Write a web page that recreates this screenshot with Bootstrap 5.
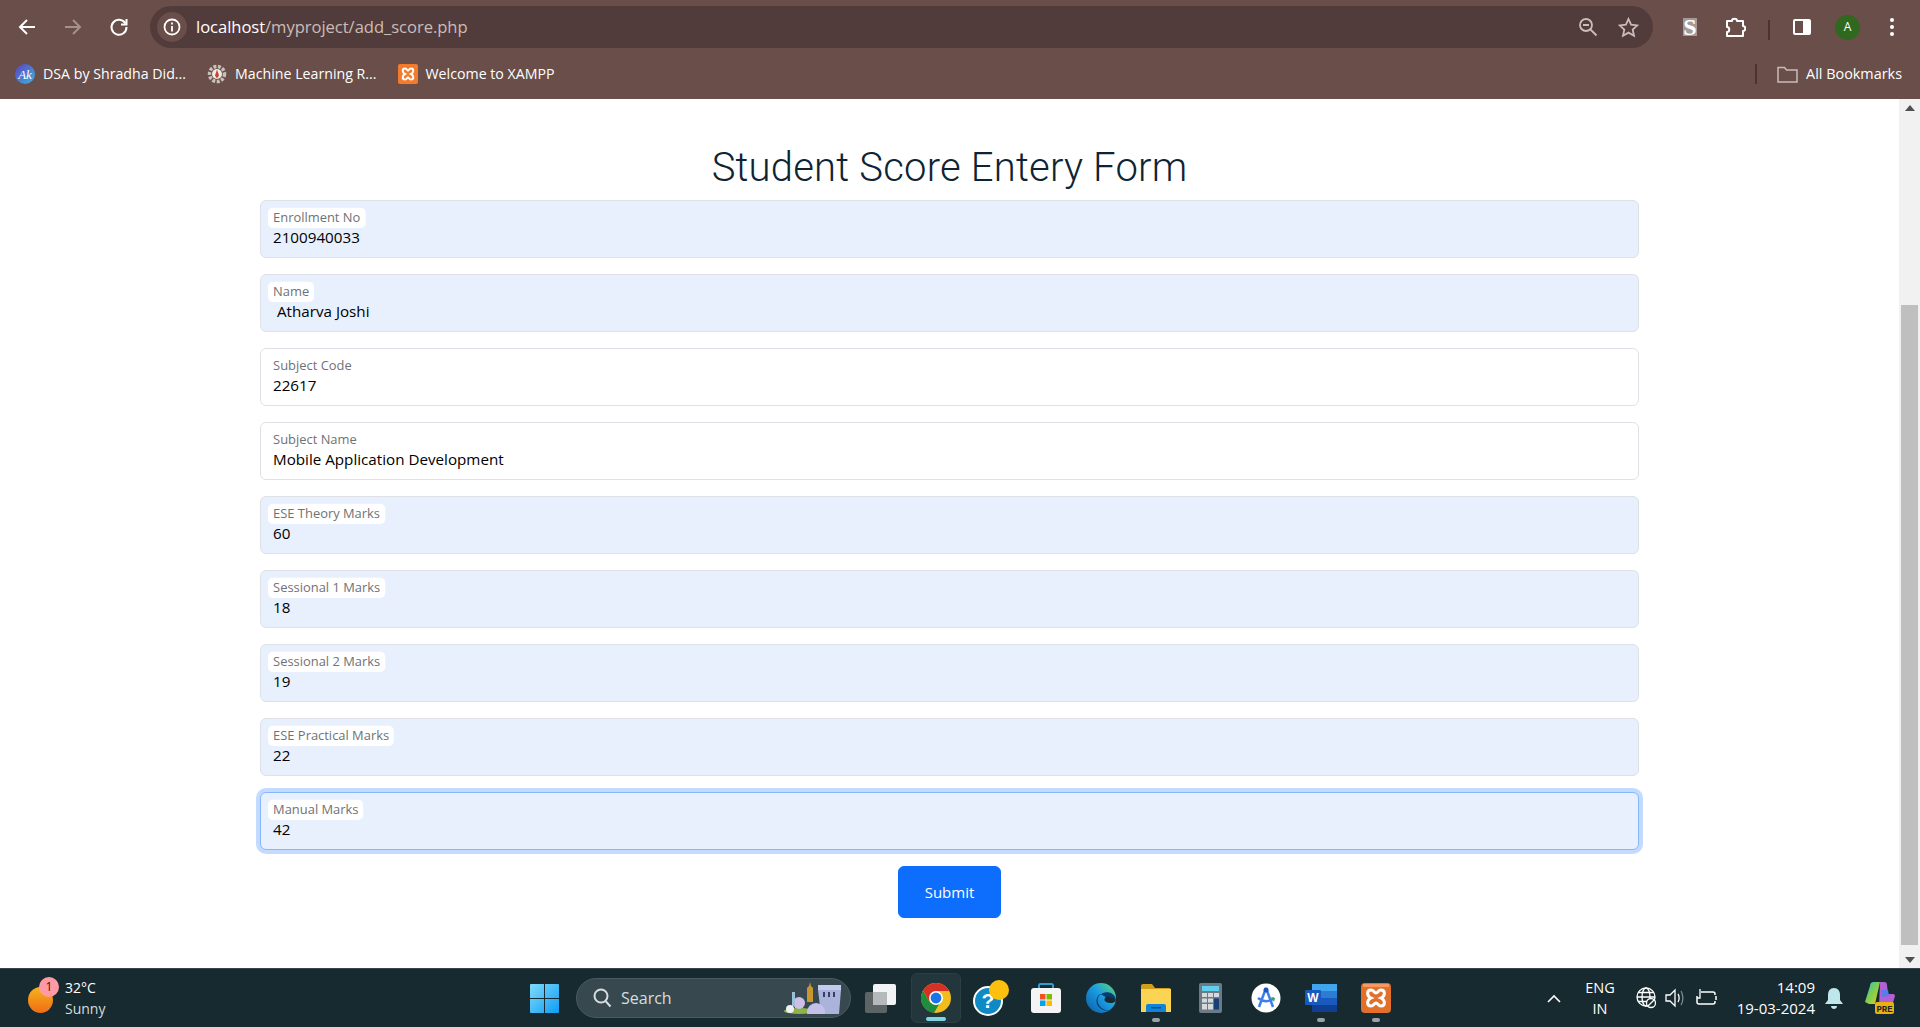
<!DOCTYPE html>
<html lang="en">
<head>
    <meta charset="UTF-8">
    <meta name="viewport" content="width=device-width, initial-scale=1.0">
    <title>Student Score Entery Form</title>
    <link rel="stylesheet" href="https://cdn.jsdelivr.net/npm/bootstrap@5.3.0/dist/css/bootstrap.min.css">
    <style>
        html, body { height: 100%; overflow: hidden; }
        body { font-family: "Open Sans", sans-serif; }

        .app-shell { height: 100vh; }

        /* browser frame */
        .browser-top { height: 99px; background: #6a4e49; color: #fff; flex: none; }
        .toolbar { height: 54px; padding-top: 6px; }
        .nav-slot { width: 46px; height: 42px; flex: none; }
        .nav-slot-first { margin-left: 4px; }
        .address-bar { width: 1503px; height: 42px; margin-left: 8px; background: #523c3b; border-radius: 21px; padding: 0 14px 0 7px; flex: none; }
        .info-chip { width: 30px; height: 30px; background: #6a4e49; border-radius: 50%; flex: none; }
        .url-text { font-size: 16.6px; margin-left: 9px; color: #fff; letter-spacing: -.05px; }
        .url-text span { color: #c9bcb9; }
        .addr-icons { gap: 20px; }
        .tool-slot { width: 41px; height: 42px; flex: none; }
        .avatar-dot { width: 25px; height: 25px; border-radius: 50%; background: #2f691d; font-size: 12px; }
        .v-sep { width: 2px; height: 20px; background: #4b3330; flex: none; }
        .sep-wrap { margin: 0 11px 0 13px; }
        .avatar-slot { margin-left: 5px; }
        .dots-slot { margin-left: 3px; }

        .bookmarks { height: 45px; padding-bottom: 5px; font-size: 14.2px; padding-left: 15px; padding-right: 18px; }
        .bm-item { width: 20px; height: 20px; flex: none; }
        .bm-text { margin-left: 8px; margin-right: 21px; }
        .bm-folder { margin-left: 20px; }
        .bm-all { font-size: 14.4px; }

        /* page */
        .page-wrap { min-height: 0; }
        .page-body { min-width: 0; padding-top: 45px; overflow: hidden; }
        .form-box { width: 1379px; }
        .form-title { font-family: Roboto, sans-serif; font-weight: 300; font-size: 40px; line-height: 48px; color: #0f2433; margin-bottom: 8px; letter-spacing: .2px; }
        .form-box .form-control { font-size: 15.2px; color: #000; }
        .form-box .form-floating > .form-control:not(:placeholder-shown) ~ label { font-size: 15.2px; line-height: 22px; width: auto; opacity: 1; color: #6f7275; }
        .form-box .form-floating > .form-control:not(:placeholder-shown) ~ label::after { content: ""; position: absolute; top: 1rem; left: .375rem; right: .375rem; height: 24px; z-index: -1; background: #fff; border-radius: 6px; }
        .form-box .is-autofilled { background: #e8f0fe; }
        .form-box .is-focused { background: #e8f0fe; border-color: #86b7fe; box-shadow: 0 0 0 .25rem rgba(13, 110, 253, .25); }
        .submit-btn { width: 103px; height: 52px; font-size: 15px; }

        .fake-scrollbar { width: 21px; background: #f1f1f1; flex: none; padding: 0 2px; }
        .scroll-arrow { height: 17px; flex: none; }
        .scroll-space { height: 189px; flex: none; }
        .scroll-thumb { height: 640px; background: #bfbfbf; flex: none; }

        /* taskbar */
        .taskbar { height: 59px; background: #172a30; color: #fff; border-top: 1px solid #3a4448; flex: none; font-size: 14px; line-height: 1.25; }
        .weather { width: 530px; padding-left: 28px; flex: none; }
        .weather-icon { width: 37px; height: 40px; flex: none; margin-top: -3px; }
        .weather-text { line-height: 21px; color: #fff; }
        .weather-text span { color: #d5dcde; }
        .win-slot { width: 46px; flex: none; }
        .search-pill { width: 275px; height: 40px; background: #37494f; border: 1px solid #4a5a60; border-radius: 20px; padding: 0 7px 0 16px; color: #d7dddf; flex: none; font-size: 16px; }
        .search-pill .search-word { margin-left: 9px; }
        .task-slot { width: 55px; height: 50px; flex: none; }
        .task-slot-first { margin-left: 2px; }
        .task-slot-active { background: #23363c; border: 1px solid #2c3f45; border-radius: 6px; width: 50px; margin: 0 2.5px; }
        .run-mark { width: 8px; height: 4px; border-radius: 2px; background: #9aa3a6; bottom: 1px; left: 50%; transform: translateX(-50%); }
        .run-mark-active { width: 20px; background: #7fd6de; }
        .tray { margin-left: 144px; }
        .tray-lang { width: 50px; text-align: center; line-height: 21px; margin-left: 14px; font-size: 14.5px; }
        .tray-globe { margin-left: 11px; }
        .tray-clock { text-align: right; line-height: 21px; width: 84px; margin-left: 14px; font-size: 15px; }
        .tray-bell { margin-left: 10px; }
        .tray-copilot { margin-left: 22px; }
    </style>
</head>
<body>
<div class="app-shell d-flex flex-column">

    <!-- browser toolbar -->
    <div class="browser-top">
        <div class="toolbar d-flex">
            <div class="nav-slot nav-slot-first d-flex align-items-center justify-content-center">
                <svg width="20" height="20" viewBox="0 0 20 20" fill="none" stroke="#fff" stroke-width="2"><path d="M18 10H3M10 3l-7 7 7 7"/></svg>
            </div>
            <div class="nav-slot d-flex align-items-center justify-content-center">
                <svg width="20" height="20" viewBox="0 0 20 20" fill="none" stroke="#a5918d" stroke-width="2"><path d="M2 10h15M10 3l7 7-7 7"/></svg>
            </div>
            <div class="nav-slot d-flex align-items-center justify-content-center">
                <svg width="20" height="20" viewBox="0 0 20 20" fill="none" stroke="#fff" stroke-width="2"><path d="M16.5 6.5A7.5 7.5 0 1 0 17.5 10"/><path d="M17.5 2v5.500h-5.500" fill="none"/></svg>
            </div>
            <div class="address-bar d-flex align-items-center">
                <div class="info-chip d-flex align-items-center justify-content-center">
                    <svg width="18" height="18" viewBox="0 0 18 18" fill="none" stroke="#fff" stroke-width="1.800"><circle cx="9" cy="9" r="7.500"/><path d="M9 8v5.500M9 4.500v2"/></svg>
                </div>
                <div class="url-text">localhost<span>/myproject/add_score.php</span></div>
                <div class="addr-icons ms-auto d-flex align-items-center">
                    <svg width="20" height="20" viewBox="0 0 20 20" fill="none" stroke="#c9bcb9" stroke-width="1.800"><circle cx="8" cy="8" r="6"/><path d="M5 8h6M12.500 12.500l6 6"/></svg>
                    <svg width="21" height="21" viewBox="0 0 21 21" fill="none" stroke="#c9bcb9" stroke-width="1.800"><path d="M10.500 2l2.600 5.700 6.200.7-4.600 4.200 1.300 6.100-5.500-3.100-5.500 3.100 1.300-6.100-4.600-4.200 6.200-.7z"/></svg>
                </div>
            </div>
            <div class="tool-slot ms-3 d-flex align-items-center justify-content-center">
                <svg width="18" height="36" viewBox="0 0 18 36"><rect x="2" y="9" width="14" height="18" fill="#a69a97"/><text x="9" y="26" text-anchor="middle" font-family="Liberation Serif, serif" font-weight="700" font-size="24" fill="#fff">S</text></svg>
            </div>
            <div class="tool-slot ms-1 d-flex align-items-center justify-content-center">
                <svg width="22" height="22" viewBox="0 0 22 22" fill="none" stroke="#fff" stroke-width="2" stroke-linejoin="round"><path d="M3 5h5c0-3 5-3 5 0h6v5c3 0 3 5 0 5v5H3v-4c3 0 3-5 0-5z"/></svg>
            </div>
            <div class="sep-wrap d-flex align-items-center"><div class="v-sep"></div></div>
            <div class="tool-slot d-flex align-items-center justify-content-center">
                <svg width="20" height="18" viewBox="0 0 20 18"><rect x="1" y="1" width="18" height="16" rx="2" fill="#fff"/><rect x="3" y="3" width="8" height="12" fill="#6a4e49"/></svg>
            </div>
            <div class="tool-slot avatar-slot d-flex align-items-center justify-content-center">
                <div class="avatar-dot d-flex align-items-center justify-content-center">A</div>
            </div>
            <div class="tool-slot dots-slot d-flex align-items-center justify-content-center">
                <svg width="6" height="20" viewBox="0 0 6 20" fill="#fff"><circle cx="3" cy="3" r="2"/><circle cx="3" cy="10" r="2"/><circle cx="3" cy="17" r="2"/></svg>
            </div>
        </div>
        <div class="bookmarks d-flex align-items-center">
            <svg class="bm-item" viewBox="0 0 20 20"><defs><linearGradient id="akGrad" x1="0" y1="0" x2="1" y2="1"><stop offset="0" stop-color="#5b3fc4"/><stop offset="1" stop-color="#3fb6d8"/></linearGradient></defs><circle cx="10" cy="10" r="10" fill="url(#akGrad)"/><text x="10" y="14.500" text-anchor="middle" font-family="Liberation Serif, serif" font-style="italic" font-size="13" fill="#fff">Ak</text></svg>
            <span class="bm-text">DSA by Shradha Did...</span>
            <svg class="bm-item" viewBox="0 0 20 20"><circle cx="10" cy="10" r="7.500" fill="none" stroke="#c9c0b8" stroke-width="3.500" stroke-dasharray="3 1.500"/><circle cx="10" cy="10" r="5" fill="#f0ebe6"/><path d="M10 5.500l2 6-2 3-2-3z" fill="#c8452c"/></svg>
            <span class="bm-text">Machine Learning R...</span>
            <svg class="bm-item" viewBox="0 0 20 20"><rect width="20" height="20" rx="2" fill="#f47b2b"/><path d="M7 4.500c-3 0-3 4 0 5.500-3 1.500-3 5.500 0 5.500 2 0 2-2 3-2s1 2 3 2c3 0 3-4 0-5.500 3-1.500 3-5.500 0-5.500-2 0-2 2-3 2s-1-2-3-2z" fill="none" stroke="#fff" stroke-width="2"/></svg>
            <span class="bm-text">Welcome to XAMPP</span>
            <div class="v-sep ms-auto"></div>
            <svg class="bm-folder" width="21" height="18" viewBox="0 0 21 18" fill="none" stroke="#c9bcb9" stroke-width="1.500"><path d="M1 2.500h6.500l2 2.500H20v12H1z"/></svg>
            <span class="bm-all ms-2">All Bookmarks</span>
        </div>
    </div>

    <!-- page with its scrollbar -->
    <div class="page-wrap d-flex flex-grow-1">
        <div class="page-body flex-grow-1 d-flex flex-column align-items-center">
            <div class="form-box">
                <h1 class="form-title text-center">Student Score Entery Form</h1>
                <form>
                    <div class="form-floating mb-3">
                        <input type="text" class="form-control is-autofilled" id="enrollment" placeholder=" " value="2100940033">
                        <label for="enrollment">Enrollment No</label>
                    </div>
                    <div class="form-floating mb-3">
                        <input type="text" class="form-control is-autofilled" id="studentName" placeholder=" " value=" Atharva Joshi">
                        <label for="studentName">Name</label>
                    </div>
                    <div class="form-floating mb-3">
                        <input type="text" class="form-control" id="subjectCode" placeholder=" " value="22617">
                        <label for="subjectCode">Subject Code</label>
                    </div>
                    <div class="form-floating mb-3">
                        <input type="text" class="form-control" id="subjectName" placeholder=" " value="Mobile Application Development">
                        <label for="subjectName">Subject Name</label>
                    </div>
                    <div class="form-floating mb-3">
                        <input type="text" class="form-control is-autofilled" id="eseTheory" placeholder=" " value="60">
                        <label for="eseTheory">ESE Theory Marks</label>
                    </div>
                    <div class="form-floating mb-3">
                        <input type="text" class="form-control is-autofilled" id="sessional1" placeholder=" " value="18">
                        <label for="sessional1">Sessional 1 Marks</label>
                    </div>
                    <div class="form-floating mb-3">
                        <input type="text" class="form-control is-autofilled" id="sessional2" placeholder=" " value="19">
                        <label for="sessional2">Sessional 2 Marks</label>
                    </div>
                    <div class="form-floating mb-3">
                        <input type="text" class="form-control is-autofilled" id="esePractical" placeholder=" " value="22">
                        <label for="esePractical">ESE Practical Marks</label>
                    </div>
                    <div class="form-floating mb-3">
                        <input type="text" class="form-control is-focused" id="manualMarks" placeholder=" " value="42">
                        <label for="manualMarks">Manual Marks</label>
                    </div>
                    <div class="text-center">
                        <button type="button" class="btn btn-primary submit-btn">Submit</button>
                    </div>
                </form>
            </div>
        </div>
        <div class="fake-scrollbar d-flex flex-column">
            <div class="scroll-arrow d-flex align-items-center justify-content-center">
                <svg width="10" height="6" viewBox="0 0 10 6" fill="#505050"><path d="M5 0l5 6H0z"/></svg>
            </div>
            <div class="scroll-space"></div>
            <div class="scroll-thumb"></div>
            <div class="scroll-arrow mt-auto d-flex align-items-center justify-content-center">
                <svg width="10" height="6" viewBox="0 0 10 6" fill="#505050"><path d="M5 6l5-6H0z"/></svg>
            </div>
        </div>
    </div>

    <!-- windows taskbar -->
    <div class="taskbar d-flex align-items-center">
        <div class="weather d-flex align-items-center">
            <svg class="weather-icon" viewBox="0 0 37 40"><defs><linearGradient id="sunGrad" x1="0" y1="0" x2="0" y2="1"><stop offset="0" stop-color="#f7b21c"/><stop offset="1" stop-color="#ef6c15"/></linearGradient></defs><ellipse cx="12.500" cy="23" rx="12.500" ry="13" fill="url(#sunGrad)"/><circle cx="21" cy="10" r="10" fill="#ff9aa2"/><text x="21" y="14" text-anchor="middle" font-family="Open Sans, sans-serif" font-size="12" fill="#222">1</text></svg>
            <div class="weather-text">32°C<br><span>Sunny</span></div>
        </div>
        <div class="win-slot">
            <svg class="d-block" width="29" height="29" viewBox="0 0 29 29"><defs><linearGradient id="winGrad" x1="0" y1="0" x2="1" y2="1"><stop offset="0" stop-color="#7fdcfb"/><stop offset="1" stop-color="#0f9bf5"/></linearGradient></defs><path fill="url(#winGrad)" d="M0 1a1 1 0 0 1 1-1h13v14H0zM15 0h13a1 1 0 0 1 1 1v13H15zM0 15h14v14H1a1 1 0 0 1-1-1zM15 15h14v13a1 1 0 0 1-1 1H15z"/></svg>
        </div>
        <div class="search-pill d-flex align-items-center">
            <svg width="19" height="20" viewBox="0 0 19 20" fill="none" stroke="#d7dddf" stroke-width="2"><circle cx="8" cy="8" r="6.500"/><path d="M12.500 13l5 5.500"/></svg>
            <span class="search-word">Search</span>
            <svg class="ms-auto" width="59" height="32" viewBox="0 0 59 32"><path d="M34 6h23v2l-2 24H37l-3-24z" fill="#a9b3dc"/><path d="M34 3h23v5H34z" fill="#c4cbec"/><path d="M39 10h2v5h-2zM44 10h2v5h-2zM49 10h2v5h-2z" fill="#38405f"/><path d="M25 4l1-4 1 4 2 2v14h-6V6z" fill="#c9962f"/><ellipse cx="15" cy="29" rx="15" ry="3" fill="#8db545"/><circle cx="15" cy="21" r="6" fill="#cdbfe6"/><circle cx="32" cy="30" r="9" fill="#c5c0ea"/><path d="M8 10h3v14H8z" fill="#9cc0d8"/><circle cx="6" cy="27" r="4" fill="#eef1f6"/></svg>
        </div>
        <div class="task-slot task-slot-first d-flex align-items-center justify-content-center">
            <svg width="32" height="29" viewBox="0 0 32 29"><rect x="0" y="8" width="22" height="21" rx="2" fill="#5d6466"/><rect x="8" y="0" width="23" height="21" rx="2" fill="#f1f3f4"/><rect x="8" y="8" width="14" height="13" fill="#b5b9bb"/></svg>
        </div>
        <div class="task-slot task-slot-active position-relative d-flex align-items-center justify-content-center">
            <svg width="30" height="30" viewBox="0 0 30 30"><circle cx="15" cy="15" r="15" fill="#f2bc1b"/><path d="M15 0A15 15 0 0 0 2 7.500L8.500 19 15 8h13A15 15 0 0 0 15 0z" fill="#d93025"/><path d="M2 7.500A15 15 0 0 0 13 30l6.500-11.300L15 22l-6.500-3z" fill="#1e8e3e"/><circle cx="15" cy="15" r="7" fill="#fff"/><circle cx="15" cy="15" r="5.400" fill="#1a73e8"/></svg>
            <div class="run-mark run-mark-active position-absolute"></div>
        </div>
        <div class="task-slot position-relative d-flex align-items-center justify-content-center">
            <svg width="36" height="36" viewBox="0 0 36 36"><circle cx="15" cy="21" r="14" fill="#0f8ac4" stroke="#fff" stroke-width="2"/><text x="15" y="28" text-anchor="middle" font-family="Liberation Sans, sans-serif" font-weight="700" font-size="21" fill="#fff">?</text><circle cx="26" cy="10" r="10" fill="#fdc00f"/></svg>
        </div>
        <div class="task-slot position-relative d-flex align-items-center justify-content-center">
            <svg width="30" height="30" viewBox="0 0 30 30"><path d="M8 6V2.500A1.500 1.500 0 0 1 9.500 1h11A1.500 1.500 0 0 1 22 2.500V6" fill="none" stroke="#2a9fd8" stroke-width="2"/><rect x="0" y="5" width="30" height="25" rx="3" fill="#f4f4f4"/><rect x="9" y="11" width="5.500" height="5.500" fill="#f25022"/><rect x="15.500" y="11" width="5.500" height="5.500" fill="#7fba00"/><rect x="9" y="17.500" width="5.500" height="5.500" fill="#00a4ef"/><rect x="15.500" y="17.500" width="5.500" height="5.500" fill="#ffb900"/></svg>
        </div>
        <div class="task-slot position-relative d-flex align-items-center justify-content-center">
            <svg width="30" height="30" viewBox="0 0 30 30"><defs><linearGradient id="edgeGrad" x1="0" y1="1" x2="1" y2="0"><stop offset="0" stop-color="#0c59a4"/><stop offset=".55" stop-color="#1b9de2"/><stop offset="1" stop-color="#5fd96a"/></linearGradient></defs><circle cx="15" cy="15" r="15" fill="url(#edgeGrad)"/><path d="M30 17c-1-7-8-9-13-7-5 2-7 7-4 12 2 4 7 6 12 5-5 2-10 0-13-4-3-5-1-10 2-12 5 2 8 6 16 6z" fill="#0b3a6e"/><path d="M30 18c-2 2-6 3-10 1-2-1-2-4 0-5 3-1 8 0 10 4z" fill="#172a30"/></svg>
        </div>
        <div class="task-slot position-relative d-flex align-items-center justify-content-center">
            <svg width="30" height="28" viewBox="0 0 30 28"><path d="M0 2a2 2 0 0 1 2-2h9l3 4h14a2 2 0 0 1 2 2v22H0z" fill="#d49f18"/><rect x="0" y="5" width="30" height="23" fill="#fcd453"/><path d="M5 28v-6a2 2 0 0 1 2-2h16a2 2 0 0 1 2 2v6z" fill="#0f84d8"/><rect x="10" y="23" width="10" height="1.500" fill="#084f94"/></svg>
            <div class="run-mark position-absolute"></div>
        </div>
        <div class="task-slot position-relative d-flex align-items-center justify-content-center">
            <svg width="23" height="30" viewBox="0 0 23 30"><rect width="23" height="30" rx="2" fill="#6c7a85"/><rect x="3" y="3" width="17" height="5" fill="#5fd0f0"/><path d="M3 10h5v4H3zM9 10h5v4H9zM15 10h5v4h-5zM3 15.500h5v4H3zM9 15.500h5v4H9zM3 21h5v5.500H3zM9 21h5v5.500H9z" fill="#d7dadd"/><rect x="15" y="15.500" width="5" height="11" fill="#173f78"/></svg>
        </div>
        <div class="task-slot position-relative d-flex align-items-center justify-content-center">
            <svg width="30" height="30" viewBox="0 0 30 30"><circle cx="15" cy="15" r="14.500" fill="#fff"/><path d="M15 5l7 19M15 5L8 24M7 15c5 4 11 4 16 0" fill="none" stroke="#3f7de8" stroke-width="2.500"/><circle cx="15" cy="7" r="2.500" fill="#1d57c4"/><path d="M20 14l4 1-1 4z" fill="#3aa757"/></svg>
        </div>
        <div class="task-slot position-relative d-flex align-items-center justify-content-center">
            <svg width="32" height="28" viewBox="0 0 32 28"><rect x="7" y="0" width="25" height="7" fill="#41a5ee"/><rect x="7" y="7" width="25" height="7" fill="#2b7cd3"/><rect x="7" y="14" width="25" height="7" fill="#185abd"/><rect x="7" y="21" width="25" height="7" fill="#103f91"/><rect x="0" y="6" width="16" height="15" rx="1" fill="#185abd"/><text x="8" y="18" text-anchor="middle" font-family="Liberation Sans, sans-serif" font-weight="700" font-size="12" fill="#fff">W</text></svg>
            <div class="run-mark position-absolute"></div>
        </div>
        <div class="task-slot position-relative d-flex align-items-center justify-content-center">
            <svg width="30" height="30" viewBox="0 0 30 30"><rect width="30" height="30" rx="4" fill="#e2702a"/><rect x="2" y="1" width="26" height="3" fill="#f39a63"/><path d="M10 7c-4.500 0-4.500 6 0 8-4.500 2-4.500 8 0 8 3 0 3-3 5-3s2 3 5 3c4.500 0 4.500-6 0-8 4.500-2 4.500-8 0-8-3 0-3 3-5 3s-2-3-5-3z" fill="none" stroke="#fff" stroke-width="3"/></svg>
            <div class="run-mark position-absolute"></div>
        </div>
        <div class="tray d-flex align-items-center">
            <svg width="14" height="9" viewBox="0 0 14 9" fill="none" stroke="#fff" stroke-width="1.600"><path d="M1 8l6-6 6 6"/></svg>
            <div class="tray-lang">ENG<br>IN</div>
            <svg class="tray-globe" width="21" height="22" viewBox="0 0 21 22" fill="none" stroke="#fff" stroke-width="1.300"><circle cx="10" cy="10" r="9"/><ellipse cx="10" cy="10" rx="4" ry="9"/><path d="M1 10h18M2 5.500h16M2 14.500h16"/><circle cx="15" cy="16" r="4.500" fill="#172a30"/><path d="M12 19l6-6"/></svg>
            <svg class="ms-2" width="22" height="20" viewBox="0 0 22 20" fill="none" stroke="#fff" stroke-width="1.300"><path d="M1 7h4l5-5v16l-5-5H1z"/><path d="M13 6c1.500 2 1.500 6 0 8"/><path d="M16 3c2.500 4 2.500 10 0 14" stroke="#7c8a8e"/></svg>
            <svg class="ms-2" width="22" height="20" viewBox="0 0 22 20" fill="none" stroke="#fff" stroke-width="1.500"><path d="M6 4h12a2 2 0 0 1 2 2v1M20 13v1a2 2 0 0 1-2 2H4a2 2 0 0 1-2-2V8"/><path d="M21 8v4"/><path d="M5 1v9h-3" stroke-width="1.300"/></svg>
            <div class="tray-clock">14:09<br>19-03-2024</div>
            <svg class="tray-bell" width="18" height="21" viewBox="0 0 18 21"><path d="M9 0c4 0 6 3 6 7v5l3 4H0l3-4V7c0-4 2-7 6-7z" fill="#bfe6ea"/><path d="M6 18h6c0 4-6 4-6 0z" fill="#bfe6ea"/></svg>
            <svg class="tray-copilot" width="30" height="32" viewBox="0 0 30 32"><defs><linearGradient id="copGrad" x1="0" y1="0" x2="1" y2="1"><stop offset="0" stop-color="#2fb8e6"/><stop offset=".5" stop-color="#7fd04a"/><stop offset="1" stop-color="#f0c430"/></linearGradient></defs><path d="M5 4a4 4 0 0 1 4-4h6l-5 22H4L0 20z" fill="url(#copGrad)"/><path d="M15 0h4a3 3 0 0 1 3 3l1 9h5a2 2 0 0 1 2 2l-3 10H14z" fill="#b35fd6"/><path d="M17 8h6l1 6-7 1z" fill="#5a7be8"/><rect x="10" y="20" width="19" height="12" rx="2" fill="#e8b010"/><text x="19.500" y="29.500" text-anchor="middle" font-family="Liberation Mono, monospace" font-weight="700" font-size="9" fill="#222">PRE</text></svg>
        </div>
    </div>
</div>
<script src="https://cdn.jsdelivr.net/npm/bootstrap@5.3.0/dist/js/bootstrap.bundle.min.js"></script>
</body>
</html>
